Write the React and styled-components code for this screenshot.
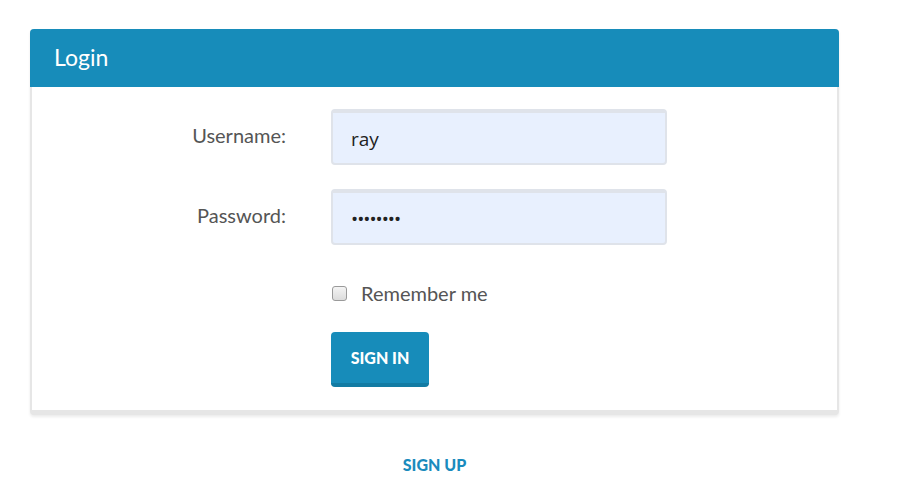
import React from "react";
import styled, { createGlobalStyle } from "styled-components";

const GlobalStyle = createGlobalStyle`
  body {
    margin: 0;
    background: #fff;
    font-family: Lato, "Open Sans", sans-serif;
  }
`;

const Page = styled.div`
  padding: 29px 62px 0 30px;
`;

const Panel = styled.section`
  border: 2px solid #e6e6e6;
  border-top: none;
  border-bottom-width: 5px;
  border-radius: 4px;
  box-shadow: 0 2px 3px rgba(0, 0, 0, 0.08);
  background: #fff;
`;

const PanelHeading = styled.h2`
  margin: 0 -2px;
  height: 58px;
  display: flex;
  align-items: center;
  padding: 0 24px 2px;
  box-sizing: border-box;
  background: #178cba;
  color: #fff;
  font-size: 23px;
  font-weight: 400;
  border-radius: 4px 4px 0 0;
`;

const PanelBody = styled.form`
  padding: 22px 0 23px;
  display: flex;
  flex-direction: column;
`;

const FormRow = styled.div`
  display: flex;
  align-items: center;
  margin-bottom: ${(p) => p.gap ?? 24}px;
`;

const Label = styled.label`
  width: 254px;
  text-align: right;
  padding: 0 45px 4px 0;
  font-size: 20px;
  color: #555;
`;

const Offset = styled.div`
  width: 299px;
`;

const Input = styled.input`
  box-sizing: border-box;
  width: 336px;
  height: 56px;
  padding: 2px 18px 0;
  border: 2px solid #dfe3ea;
  border-top-width: 4px;
  border-radius: 4px;
  background: #e8f0fe;
  font-family: "Open Sans", sans-serif;
  font-size: 19px;
  color: #222;
  outline: none;
  letter-spacing: ${(p) => (p.type === "password" ? "-1px" : "0")};
`;

const CheckLabel = styled.label`
  display: flex;
  align-items: center;
  gap: 14px;
  font-size: 20px;
  color: #555;
  margin-top: -2px;
`;

const Check = styled.span`
  box-sizing: border-box;
  width: 15px;
  height: 15px;
  margin-left: 1px;
  border: 1px solid #9a9a9a;
  border-radius: 3px;
  background: linear-gradient(#f4f4f4, #dcdcdc);
`;

const Button = styled.button`
  width: 98px;
  height: 55px;
  border: none;
  border-bottom: 4px solid #127ba3;
  border-radius: 4px;
  background: #178cba;
  color: #fff;
  font-family: Lato, sans-serif;
  font-size: 16px;
  font-weight: 900;
  padding: 0;
  cursor: pointer;
`;

const Footer = styled.div`
  text-align: center;
  padding-top: 40px;
`;

const SignUp = styled.a`
  color: #1a8bbd;
  font-size: 16px;
  font-weight: 900;
  text-decoration: none;
  text-transform: uppercase;
`;

export default function App() {
  return (
    <Page>
      <GlobalStyle />
      <Panel>
        <PanelHeading>Login</PanelHeading>
        <PanelBody onSubmit={(e) => e.preventDefault()}>
          <FormRow>
            <Label htmlFor="username">Username:</Label>
            <Input id="username" defaultValue="ray" />
          </FormRow>
          <FormRow gap={38}>
            <Label htmlFor="password">Password:</Label>
            <Input id="password" type="password" defaultValue="password" />
          </FormRow>
          <FormRow gap={27}>
            <Offset />
            <CheckLabel>
              <Check />
              Remember me
            </CheckLabel>
          </FormRow>
          <FormRow gap={0}>
            <Offset />
            <Button type="submit">SIGN IN</Button>
          </FormRow>
        </PanelBody>
      </Panel>
      <Footer>
        <SignUp href="#">Sign up</SignUp>
      </Footer>
    </Page>
  );
}
